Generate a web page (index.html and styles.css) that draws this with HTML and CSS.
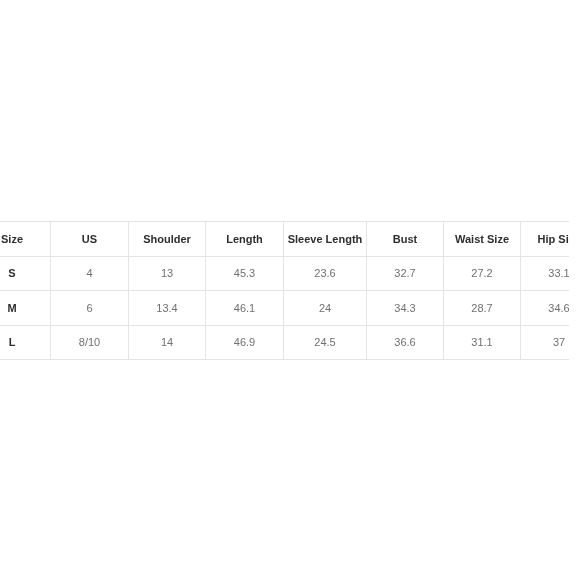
FILE: index.html
```html
<!DOCTYPE html>
<html>
<head>
<meta charset="utf-8">
<link rel="stylesheet" href="styles.css">
</head>
<body>
<div class="frame">
  <table class="chart">
    <colgroup>
      <col class="c77"><col class="c78"><col class="c77"><col class="c78"><col class="c83"><col class="c77"><col class="c77"><col class="c77">
    </colgroup>
    <thead>
      <tr><th>Size</th><th>US</th><th>Shoulder</th><th>Length</th><th>Sleeve Length</th><th>Bust</th><th>Waist Size</th><th>Hip Size</th></tr>
    </thead>
    <tbody>
      <tr><th>S</th><td>4</td><td>13</td><td>45.3</td><td>23.6</td><td>32.7</td><td>27.2</td><td>33.1</td></tr>
      <tr><th>M</th><td>6</td><td>13.4</td><td>46.1</td><td>24</td><td>34.3</td><td>28.7</td><td>34.6</td></tr>
      <tr><th>L</th><td>8/10</td><td>14</td><td>46.9</td><td>24.5</td><td>36.6</td><td>31.1</td><td>37</td></tr>
    </tbody>
  </table>
</div>
</body>
</html>
```
FILE: styles.css
```css
html, body {
  margin: 0;
  padding: 0;
  background: #ffffff;
}
.frame {
  width: 569px;
  height: 580px;
  overflow: hidden;
  padding-top: 221px;
  box-sizing: border-box;
}
.chart {
  margin-left: -27px;
  border-collapse: collapse;
  table-layout: fixed;
  width: 624px;
  font-family: "Liberation Sans", Arial, sans-serif;
  font-size: 11px;
  filter: blur(0.35px);
}
.c77 { width: 77px; }
.c78 { width: 78px; }
.c83 { width: 83px; }
.chart th, .chart td {
  border: 1px solid #e4e4e4;
  height: 33.5px;
  padding: 0;
  text-align: center;
  vertical-align: middle;
  white-space: nowrap;
  overflow: hidden;
}
.chart th {
  font-weight: bold;
  color: #2e2e2e;
}
.chart td {
  color: #707070;
}
```
